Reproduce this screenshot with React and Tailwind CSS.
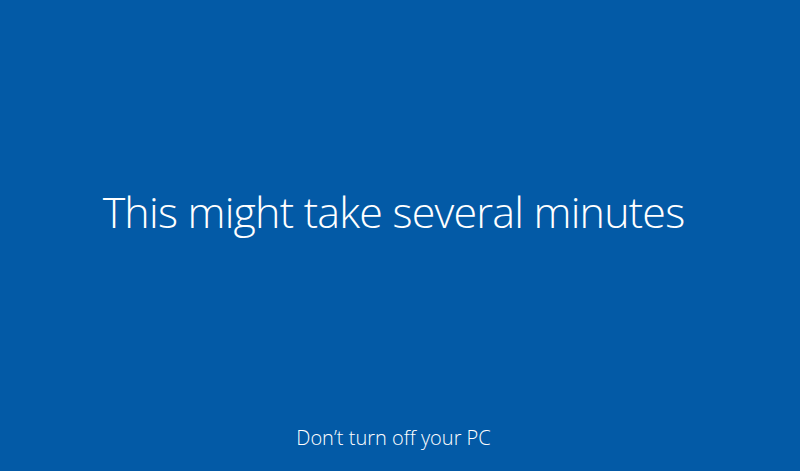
export default function App() {
  return (
    <div
      className="flex h-[471px] w-full flex-col items-center bg-[#035aa6] pr-[13px] text-white"
      style={{ fontFamily: '"Open Sans", "Noto Sans", sans-serif' }}
    >
      <h1 className="pt-[190px] text-[43px] font-light leading-none tracking-[-0.8px]">This might take several minutes</h1>
      <p className="mt-auto pb-[23px] text-[20px] font-light leading-none">Don’t turn off your PC</p>
    </div>
  );
}
